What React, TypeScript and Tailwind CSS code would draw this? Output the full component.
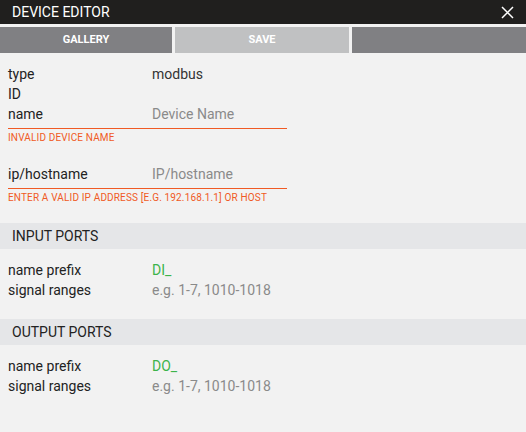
import React from "react";

function Row({ label, value, valueClass = "text-[#333]" }: { label: string; value?: string; valueClass?: string }) {
    return (
        <div className="flex h-5 items-center">
            <div className="w-[144px] text-[#222]">{label}</div>
            <div className={valueClass}>{value}</div>
        </div>
    );
}

function Field({ label, placeholder, error }: { label: string; placeholder: string; error: string }) {
    return (
        <div>
            <div className="flex h-5 w-[279px] items-center">
                <div className="w-[144px] text-[#222]">{label}</div>
                <div className="text-[#8a8a8a]">{placeholder}</div>
            </div>
            <div className="mt-[4px] h-px w-[279px] bg-[#f05a24]" />
            <div className="mt-[3px] text-[10px] leading-3 tracking-[0.15px] text-[#f05a24] uppercase">{error}</div>
        </div>
    );
}

function Section({ title, prefix }: { title: string; prefix: string }) {
    return (
        <div>
            <div className="flex h-[26px] items-center bg-[#e5e6e8] px-3 text-[14px] text-[#222]">{title}</div>
            <div className="px-2 pt-[11px] pb-[19px]">
                <Row label="name prefix" value={prefix} valueClass="text-[#3cb44a]" />
                <Row label="signal ranges" value="e.g. 1-7, 1010-1018" valueClass="text-[#8a8a8a]" />
            </div>
        </div>
    );
}

export default function App() {
    return (
        <div className="h-[432px] w-[526px] bg-[#f2f2f2] text-[14px] font-['Roboto',sans-serif]">
            <div className="flex h-6 items-center justify-between bg-[#201f1e] pr-3 pl-3">
                <span className="text-[14px] text-white">DEVICE EDITOR</span>
                <svg width="13" height="13" viewBox="0 0 13 13" className="text-white">
                    <path d="M1 1 L12 12 M12 1 L1 12" stroke="currentColor" strokeWidth="1.5" />
                </svg>
            </div>
            <div className="mt-[3px] flex h-[26px] gap-[3px] text-[11px] font-bold text-white">
                <div className="flex w-[172px] items-center justify-center bg-[#808083]">GALLERY</div>
                <div className="flex w-[174px] items-center justify-center bg-[#c0c1c2]">SAVE</div>
                <div className="flex-1 bg-[#808083]" />
            </div>
            <div className="px-2 pt-[11px]">
                <Row label="type" value="modbus" />
                <Row label="ID" />
                <Field label="name" placeholder="Device Name" error="Invalid device name" />
                <div className="h-[20px]" />
                <Field label="ip/hostname" placeholder="IP/hostname" error="Enter a valid IP address [e.g. 192.168.1.1] or host" />
            </div>
            <div className="mt-[19px]">
                <Section title="INPUT PORTS" prefix="DI_" />
                <Section title="OUTPUT PORTS" prefix="DO_" />
            </div>
        </div>
    );
}
